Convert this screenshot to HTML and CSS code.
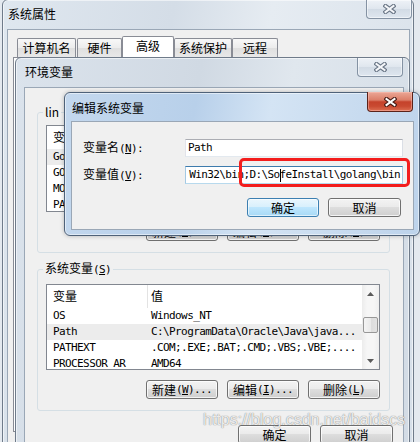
FILE: index.html
```html
<!DOCTYPE html>
<html lang="zh-CN">
<head>
<meta charset="utf-8">
<title>编辑系统变量</title>
<link rel="stylesheet" href="styles.css">
</head>
<body>
<section class="win win-sys">
  <div class="cap">
    <span class="cap-title">系统属性</span>
    <span class="xbtn xbtn-sys"><svg width="13" height="10" viewBox="0 0 13 10"><path d="M2.5 2L10.5 8M10.5 2L2.5 8" stroke="#6a7686" stroke-width="4.2" stroke-linecap="square"/><path d="M2.5 2L10.5 8M10.5 2L2.5 8" stroke="#f4f6f9" stroke-width="2" stroke-linecap="square"/></svg></span>
  </div>
  <div class="client sys-client">
    <div class="tabs">
      <span class="tab t1">计算机名</span>
      <span class="tab t2">硬件</span>
      <span class="tab t3 on">高级</span>
      <span class="tab t4">系统保护</span>
      <span class="tab t5">远程</span>
    </div>
    <div class="tab-page"></div>
  </div>
</section>

<section class="win win-env">
  <div class="cap">
    <span class="cap-title">环境变量</span>
    <span class="xbtn xbtn-env"><svg width="13" height="10" viewBox="0 0 13 10"><path d="M2.5 2L10.5 8M10.5 2L2.5 8" stroke="#6a7686" stroke-width="4.2" stroke-linecap="square"/><path d="M2.5 2L10.5 8M10.5 2L2.5 8" stroke="#f4f6f9" stroke-width="2" stroke-linecap="square"/></svg></span>
  </div>
  <div class="client env-client">
    <fieldset class="grp grp-user">
      <legend>lin</legend>
      <div class="lv lv-user">
        <div class="lv-main">
          <div class="lv-row lv-head"><span class="c1">变量</span><span class="c2">值</span></div>
          <div class="lv-row sel"><span class="c1 m">Go</span><span class="c2 m"></span></div>
          <div class="lv-row"><span class="c1 m">GO</span><span class="c2 m"></span></div>
          <div class="lv-row"><span class="c1 m">MO</span><span class="c2 m"></span></div>
          <div class="lv-row"><span class="c1 m">PA</span><span class="c2 m"></span></div>
        </div>
      </div>
      <div class="btns">
        <span class="btn">新建<span class="m">(<u>N</u>)...</span></span>
        <span class="btn">编辑<span class="m">(<u>E</u>)...</span></span>
        <span class="btn">删除<span class="m">(<u>D</u>)</span></span>
      </div>
    </fieldset>

    <fieldset class="grp grp-sys">
      <legend>系统变量<span class="m">(<u>S</u>)</span></legend>
      <div class="lv lv-sys">
        <div class="lv-main">
          <div class="lv-row lv-head"><span class="c1">变量</span><span class="c2">值</span></div>
          <div class="lv-row"><span class="c1 m">OS</span><span class="c2 m">Windows_NT</span></div>
          <div class="lv-row sel"><span class="c1 m">Path</span><span class="c2 m">C:\ProgramData\Oracle\Java\java...</span></div>
          <div class="lv-row"><span class="c1 m">PATHEXT</span><span class="c2 m">.COM;.EXE;.BAT;.CMD;.VBS;.VBE;....</span></div>
          <div class="lv-row"><span class="c1 m">PROCESSOR_AR</span><span class="c2 m">AMD64</span></div>
        </div>
        <div class="sb">
          <span class="sb-arrow"><svg width="7" height="4" viewBox="0 0 7 4"><path d="M0 4L3.5 0L7 4Z" fill="#5a5a5a"/></svg></span>
          <span class="sb-thumb"></span>
          <span class="sb-fill"></span>
          <span class="sb-arrow"><svg width="7" height="4" viewBox="0 0 7 4"><path d="M0 0L3.5 4L7 0Z" fill="#5a5a5a"/></svg></span>
        </div>
      </div>
      <div class="btns">
        <span class="btn">新建<span class="m">(<u>W</u>)...</span></span>
        <span class="btn">编辑<span class="m">(<u>I</u>)...</span></span>
        <span class="btn">删除<span class="m">(<u>L</u>)</span></span>
      </div>
    </fieldset>

    <div class="foot">
      <span class="btn btn-w73">确定</span>
      <span class="btn btn-w73">取消</span>
    </div>
  </div>
</section>

<section class="win win-edit">
  <div class="cap cap-edit">
    <span class="cap-title">编辑系统变量</span>
    <span class="xbtn xbtn-red"><svg width="13" height="10" viewBox="0 0 13 10"><path d="M2.5 2L10.5 8M10.5 2L2.5 8" stroke="#4a1d16" stroke-width="4.2" stroke-linecap="square"/><path d="M2.5 2L10.5 8M10.5 2L2.5 8" stroke="#ffffff" stroke-width="2" stroke-linecap="square"/></svg></span>
  </div>
  <div class="client edit-client">
    <div class="frow">
      <span class="flabel">变量名<span class="m">(<u>N</u>):</span></span>
      <span class="field"><span class="m">Path</span></span>
    </div>
    <div class="frow">
      <span class="flabel">变量值<span class="m">(<u>V</u>):</span></span>
      <span class="field field-focus"><span class="m">Win32\bin;D:\So<span class="caret"></span>feInstall\golang\bin</span></span>
    </div>
    <div class="edit-btns">
      <span class="btn btn-def">确定</span>
      <span class="btn btn-w73">取消</span>
    </div>
  </div>
</section>

<div class="hl"></div>
<div class="wm">https://blog.csdn.net/baidscs</div>
</body>
</html>
```

FILE: styles.css
```css
* { box-sizing: border-box; }
html, body { margin: 0; padding: 0; }
body {
  width: 420px;
  height: 442px;
  overflow: hidden;
  position: relative;
  background: #e4e9ef;
  font-family: "Noto Sans CJK SC", "Noto Sans", sans-serif;
  font-size: 12px;
  line-height: 16px;
  color: #000;
}
.m {
  font-family: "DejaVu Sans Mono", "Liberation Mono", monospace;
  font-size: 11px;
  letter-spacing: -0.6px;
}
u { text-decoration: underline; text-underline-offset: 1px; }

/* windows */
.win {
  position: absolute;
  display: flex;
  flex-direction: column;
  border: 1px solid #6f7b8a;
  border-radius: 6px 6px 0 0;
  box-shadow: inset 0 0 0 1px rgba(255,255,255,.55);
}
.win-sys {
  left: 2px; top: -1px; width: 412px; height: 470px;
  padding: 0 3px 0 4px;
  background: linear-gradient(100deg, #dfe7ef 0%, #d4dde7 35%, #e6ecf2 55%, #d6dfe9 100%);
}
.win-env {
  left: 15px; top: 57px; width: 395px; height: 420px;
  padding: 0 5px 0 8px;
  background: linear-gradient(100deg, #dbe3ec 0%, #d0d9e3 40%, #e0e7ee 60%, #d2dbe5 100%);
}
.win-edit {
  left: 64px; top: 92px; width: 356px; height: 144px;
  padding: 0 5px 5px 6px;
  border-color: #4f6279;
  border-radius: 6px;
  background: linear-gradient(100deg, #c4d8ee 0%, #b8d0ea 35%, #d4e4f4 55%, #bdd3eb 100%);
  box-shadow: inset 0 0 0 1px rgba(255,255,255,.5), 0 0 4px rgba(0,0,0,.25);
}

.cap {
  flex: none;
  height: 29px;
  display: flex;
  justify-content: space-between;
  align-items: flex-start;
}
.cap-edit { height: 28px; }
.cap-title { margin: 6px 0 0 1px; line-height: 16px; }
.cap-edit .cap-title { margin-top: 7px; }

.xbtn {
  width: 46px; height: 19px;
  display: flex; align-items: center; justify-content: center;
  border: 1px solid #8492a3; border-top: none;
  border-radius: 0 0 4px 4px;
  background: linear-gradient(#eef2f7 0%, #dfe6ee 50%, #d2dbe5 51%, #dee6ef 100%);
  box-shadow: inset 0 0 0 1px rgba(255,255,255,.5);
}
.xbtn-sys { margin-right: -2px; }
.xbtn-env { margin-right: 1px; }
.xbtn-red {
  margin-right: 1px; margin-top: -1px; height: 20px;
  border-color: #5b2219;
  background: linear-gradient(#eba796 0%, #dc7f69 42%, #c5422b 52%, #c94a31 75%, #dc6f52 100%);
  box-shadow: inset 0 0 0 1px rgba(255,200,190,.45);
}

.client {
  flex: 1;
  display: flex;
  flex-direction: column;
  background: #f0f0f0;
  border: 1px solid #9aa7b6;
  min-height: 0;
}

/* tabs */
.tabs {
  flex: none;
  height: 27px;
  display: flex;
  align-items: flex-end;
  padding: 6px 0 0 9px;
}
.tab {
  height: 19px;
  border: 1px solid #898c95;
  border-bottom: none;
  border-radius: 2px 2px 0 0;
  background: linear-gradient(#f8f8f8 0%, #ececec 50%, #dfdfdf 51%, #e8e8e8 100%);
  text-align: center;
  line-height: 17px;
}
.tab.on { height: 21px; background: #fff; line-height: 18px; }
.t1 { width: 59px; margin-right: 1px; }
.t2 { width: 45px; }
.t3 { width: 52px; }
.t4 { width: 58px; }
.t5 { width: 46px; }
.tab-page {
  flex: none;
  height: 375px;
  margin: 0 4px 0 5px;
  background: #fff;
  border: 1px solid #898c95;
}

/* env dialog */
.grp {
  margin: 0 13px 0 12px;
  border: 1px solid #d5dfe5;
  border-radius: 3px;
  padding: 6px 9px 11px 8px;
  min-width: 0;
}
.grp-user { margin-top: 17px; }
.grp-sys { margin-top: 8px; padding-top: 7px; }
.grp legend { padding: 0 2px; margin-left: -3px; line-height: 14px; }

.lv {
  display: flex;
  border: 1px solid #828790;
  background: #fff;
  overflow: hidden;
  margin-bottom: 10px;
}
.lv-user { height: 87px; }
.lv-sys { height: 86px; }
.lv-main { flex: 1; min-width: 0; overflow: hidden; }
.lv-row { display: flex; height: 16px; line-height: 16px; white-space: nowrap; }
.lv-head { height: 23px; line-height: 22px; }
.c1 { flex: none; width: 101px; padding-left: 6px; overflow: hidden; }
.c2 { flex: 1; padding-left: 3px; overflow: hidden; }
.lv-head .c1 { border-right: 1px solid #e3e3e3; }
.sel { background: #ececec; }

.sb {
  flex: none;
  width: 17px;
  display: flex;
  flex-direction: column;
  align-items: center;
  background: linear-gradient(90deg, #ececec 0%, #f6f6f6 30%, #f6f6f6 70%, #eeeeee 100%);
}
.sb-arrow { flex: none; height: 17px; display: flex; align-items: center; justify-content: center; }
.sb-thumb {
  flex: none;
  width: 15px; height: 16px;
  margin-top: 15px;
  border: 1px solid #979797;
  border-radius: 2px;
  background: linear-gradient(90deg, #f4f4f4 0%, #eaeaea 50%, #dcdcdc 51%, #e2e2e2 100%);
}
.sb-fill { flex: 1; }

.btns { display: flex; justify-content: flex-end; gap: 9px; }
.btn {
  flex: none;
  width: 72px; height: 19px;
  display: flex; align-items: center; justify-content: center;
  border: 1px solid #707070;
  border-radius: 3px;
  background: linear-gradient(#f3f3f3 0%, #ebebeb 45%, #dddddd 50%, #cfcfcf 100%);
  box-shadow: inset 0 0 0 1px rgba(255,255,255,.75);
  white-space: nowrap;
  line-height: 16px;
}
.btn-w73 { width: 73px; }
.btn-def {
  border-color: #3c7fb1;
  background: linear-gradient(#eaf6fd 0%, #d9f0fc 45%, #bee6fd 50%, #a7d9f5 100%);
  box-shadow: inset 0 0 0 1px rgba(255,255,255,.6);
}
.foot { display: flex; justify-content: flex-end; gap: 9px; margin: 14px 10px 0 0; }
.foot .btn { line-height: 10px; }

/* edit dialog */
.edit-client { padding: 17px 10px 0 11px; }
.frow { display: flex; align-items: center; height: 18px; }
.frow + .frow { margin-top: 9px; }
.flabel { flex: none; width: 102px; white-space: nowrap; }
.field {
  flex: 1;
  height: 18px;
  min-width: 0;
  display: flex;
  align-items: center;
  padding: 0 2px;
  overflow: hidden;
  white-space: nowrap;
  background: #fff;
  border: 1px solid;
  border-color: #abadb3 #dbdfe6 #e3e9ef #e2e3ea;
}
.field-focus { justify-content: flex-end; border-color: #3d7bad #a4c9e3 #b7d9ed #a4c9e3; }
.field .m { flex: none; }
.caret {
  display: inline-block;
  width: 1px; height: 13px;
  margin-right: -1px;
  background: #000;
  vertical-align: middle;
}
.edit-btns { display: flex; justify-content: flex-end; gap: 9px; margin: 14px 2px 0 0; }

/* overlays */
.hl {
  position: absolute;
  left: 239px; top: 158px;
  width: 171px; height: 29px;
  border: 3px solid #f31d1d;
  border-radius: 5px;
}
.wm {
  position: absolute;
  left: 203px; top: 413px;
  font-family: "Liberation Sans", Arial, sans-serif;
  font-size: 16px;
  line-height: 14px;
  color: rgba(255,255,255,.85);
  text-shadow: 0 0 1px rgba(80,80,80,.6), 0 0 1px rgba(80,80,80,.4);
  white-space: nowrap;
}
```
